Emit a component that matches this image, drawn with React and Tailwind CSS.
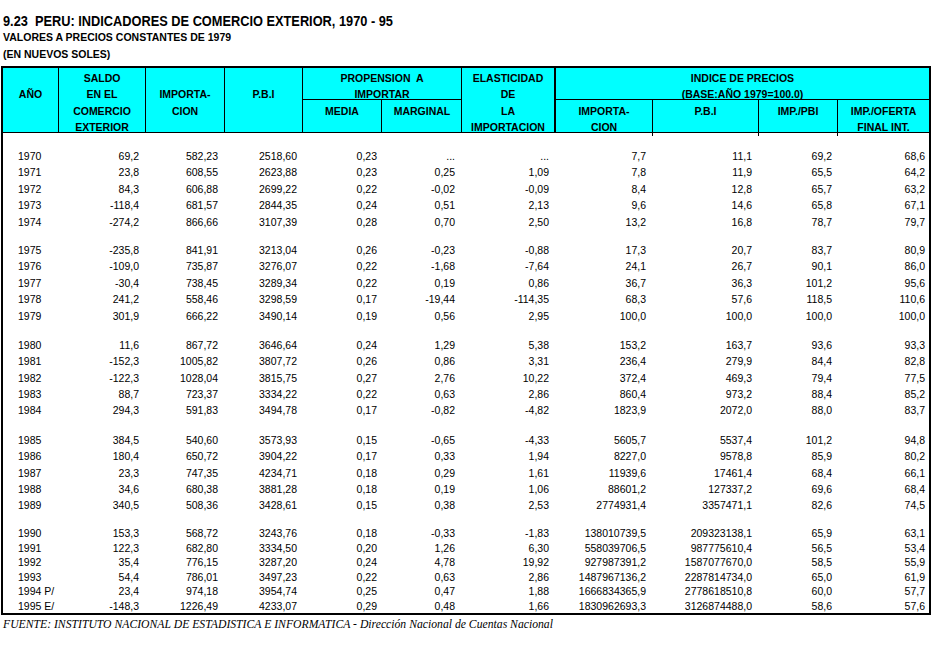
import React from "react";

const colW = [
  "w-[56px] pl-[15px] text-left",
  "w-[87px] pr-[7px] text-right",
  "w-[79px] pr-[7px] text-right",
  "w-[78px] pr-[6px] text-right",
  "w-[79px] pr-[5px] text-right",
  "w-[80px] pr-[7px] text-right",
  "w-[94px] pr-[7px] text-right",
  "w-[97px] pr-[7px] text-right",
  "w-[106px] pr-[7px] text-right",
  "w-[79px] pr-[6px] text-right",
  "w-[91px] pr-[4px] text-right",
];

const groups = [
  {
    gap: "h-[15px]",
    row: "h-[16.4px] leading-[16.4px]",
    rows: [
      ["1970", "69,2", "582,23", "2518,60", "0,23", "...", "...", "7,7", "11,1", "69,2", "68,6"],
      ["1971", "23,8", "608,55", "2623,88", "0,23", "0,25", "1,09", "7,8", "11,9", "65,5", "64,2"],
      ["1972", "84,3", "606,88", "2699,22", "0,22", "-0,02", "-0,09", "8,4", "12,8", "65,7", "63,2"],
      ["1973", "-118,4", "681,57", "2844,35", "0,24", "0,51", "2,13", "9,6", "14,6", "65,8", "67,1"],
      ["1974", "-274,2", "866,66", "3107,39", "0,28", "0,70", "2,50", "13,2", "16,8", "78,7", "79,7"],
    ],
  },
  {
    gap: "h-[12px]",
    row: "h-[16.4px] leading-[16.4px]",
    rows: [
      ["1975", "-235,8", "841,91", "3213,04", "0,26", "-0,23", "-0,88", "17,3", "20,7", "83,7", "80,9"],
      ["1976", "-109,0", "735,87", "3276,07", "0,22", "-1,68", "-7,64", "24,1", "26,7", "90,1", "86,0"],
      ["1977", "-30,4", "738,45", "3289,34", "0,22", "0,19", "0,86", "36,7", "36,3", "101,2", "95,6"],
      ["1978", "241,2", "558,46", "3298,59", "0,17", "-19,44", "-114,35", "68,3", "57,6", "118,5", "110,6"],
      ["1979", "301,9", "666,22", "3490,14", "0,19", "0,56", "2,95", "100,0", "100,0", "100,0", "100,0"],
    ],
  },
  {
    gap: "h-[13px]",
    row: "h-[16.4px] leading-[16.4px]",
    rows: [
      ["1980", "11,6", "867,72", "3646,64", "0,24", "1,29", "5,38", "153,2", "163,7", "93,6", "93,3"],
      ["1981", "-152,3", "1005,82", "3807,72", "0,26", "0,86", "3,31", "236,4", "279,9", "84,4", "82,8"],
      ["1982", "-122,3", "1028,04", "3815,75", "0,27", "2,76", "10,22", "372,4", "469,3", "79,4", "77,5"],
      ["1983", "88,7", "723,37", "3334,22", "0,22", "0,63", "2,86", "860,4", "973,2", "88,4", "85,2"],
      ["1984", "294,3", "591,83", "3494,78", "0,17", "-0,82", "-4,82", "1823,9", "2072,0", "88,0", "83,7"],
    ],
  },
  {
    gap: "h-[13px]",
    row: "h-[16.4px] leading-[16.4px]",
    rows: [
      ["1985", "384,5", "540,60", "3573,93", "0,15", "-0,65", "-4,33", "5605,7", "5537,4", "101,2", "94,8"],
      ["1986", "180,4", "650,72", "3904,22", "0,17", "0,33", "1,94", "8227,0", "9578,8", "85,9", "80,2"],
      ["1987", "23,3", "747,35", "4234,71", "0,18", "0,29", "1,61", "11939,6", "17461,4", "68,4", "66,1"],
      ["1988", "34,6", "680,38", "3881,28", "0,18", "0,19", "1,06", "88601,2", "127337,2", "69,6", "68,4"],
      ["1989", "340,5", "508,36", "3428,61", "0,15", "0,38", "2,53", "2774931,4", "3357471,1", "82,6", "74,5"],
    ],
  },
  {
    gap: "h-[12.6px]",
    row: "h-[14.5px] leading-[14.5px]",
    rows: [
      ["1990", "153,3", "568,72", "3243,76", "0,18", "-0,33", "-1,83", "138010739,5", "209323138,1", "65,9", "63,1"],
      ["1991", "122,3", "682,80", "3334,50", "0,20", "1,26", "6,30", "558039706,5", "987775610,4", "56,5", "53,4"],
      ["1992", "35,4", "776,15", "3287,20", "0,24", "4,78", "19,92", "927987391,2", "1587077670,0", "58,5", "55,9"],
      ["1993", "54,4", "786,01", "3497,23", "0,22", "0,63", "2,86", "1487967136,2", "2287814734,0", "65,0", "61,9"],
      ["1994 P/", "23,4", "974,18", "3954,74", "0,25", "0,47", "1,88", "1666834365,9", "2778618510,8", "60,0", "57,7"],
      ["1995 E/", "-148,3", "1226,49", "4233,07", "0,29", "0,48", "1,66", "1830962693,3", "3126874488,0", "58,6", "57,6"],
    ],
  },
];

// tall header cell spanning both header rows
const HeadCell = ({ w, lines, thick }) => (
  <div
    className={`${w} shrink-0 h-full ${thick ? "border-r-2" : "border-r"} border-black pt-[2px] text-center leading-[16.4px] whitespace-nowrap`}
  >
    {lines.map((l, i) => (
      <div key={i}>{l || "\u00a0"}</div>
    ))}
  </div>
);

const SubCell = ({ w, lines, last }) => (
  <div className={`${w} shrink-0 h-full ${last ? "" : "border-r border-black"} pt-[3px] text-center leading-[16.4px] whitespace-nowrap`}>
    {lines.map((l, i) => (
      <div key={i}>{l}</div>
    ))}
  </div>
);

export default function App() {
  return (
    <div className="w-[932px] h-[646px] bg-white text-black overflow-hidden">
      <div className="pl-[3px] pt-[12px] font-['Liberation_Sans',sans-serif]">
        <div className="w-max origin-left scale-x-[0.913] text-[14px] leading-[18px] font-bold whitespace-pre">
          9.23  PERU: INDICADORES DE COMERCIO EXTERIOR, 1970 - 95
        </div>
        <div className="text-[10.5px] font-bold leading-[15px]">VALORES A PRECIOS CONSTANTES DE 1979</div>
        <div className="text-[10.5px] font-bold leading-[18px]">(EN NUEVOS SOLES)</div>
      </div>

      <div className="ml-[1px] mt-[3px] w-[930px] border-2 border-black font-['Liberation_Sans',sans-serif]">
        {/* header */}
        <div className="flex h-[65px] bg-[#00ffff] border-b border-black text-[10.5px] font-bold">
          <HeadCell w="w-[56px]" lines={["", "AÑO"]} />
          <HeadCell w="w-[87px]" lines={["SALDO", "EN EL", "COMERCIO", "EXTERIOR"]} />
          <HeadCell w="w-[79px]" lines={["", "IMPORTA-", "CION"]} />
          <HeadCell w="w-[78px]" lines={["", "P.B.I"]} />
          <div className="w-[159px] shrink-0 h-full flex flex-col border-r border-black">
            <div className="h-[32px] border-b border-black pt-[2px] text-center leading-[16.4px] whitespace-pre">
              <div>PROPENSION  A</div>
              <div>IMPORTAR</div>
            </div>
            <div className="flex flex-1">
              <SubCell w="w-[79px]" lines={["MEDIA"]} />
              <SubCell w="w-[80px]" lines={["MARGINAL"]} last />
            </div>
          </div>
          <HeadCell w="w-[94px]" lines={["ELASTICIDAD", "DE", "LA", "IMPORTACION"]} thick />
          <div className="w-[373px] shrink-0 h-full flex flex-col">
            <div className="h-[32px] border-b border-black pt-[2px] text-center leading-[16.4px] whitespace-nowrap">
              <div>INDICE DE PRECIOS</div>
              <div>(BASE:AÑO 1979=100.0)</div>
            </div>
            <div className="flex flex-1">
              <SubCell w="w-[97px]" lines={["IMPORTA-", "CION"]} />
              <SubCell w="w-[106px]" lines={["P.B.I"]} />
              <SubCell w="w-[79px]" lines={["IMP./PBI"]} />
              <SubCell w="w-[91px]" lines={["IMP./OFERTA", "FINAL INT."]} last />
            </div>
          </div>
        </div>

        {/* body */}
        <div className="text-[10.5px]">
          {groups.map((g, gi) => (
            <div key={gi}>
              <div className={g.gap} />
              {g.rows.map((r) => (
                <div key={r[0]} className={`flex ${g.row}`}>
                  {r.map((v, i) => (
                    <div key={i} className={`${colW[i]} shrink-0 whitespace-nowrap`}>
                      {v}
                    </div>
                  ))}
                </div>
              ))}
            </div>
          ))}
        </div>
      </div>

      <div className="pl-[3px] mt-[3px] font-['Liberation_Serif',serif] italic text-[11.7px] leading-[14px] whitespace-nowrap">
        FUENTE: INSTITUTO NACIONAL DE ESTADISTICA E INFORMATICA - Dirección Nacional de Cuentas Nacional
      </div>
    </div>
  );
}
